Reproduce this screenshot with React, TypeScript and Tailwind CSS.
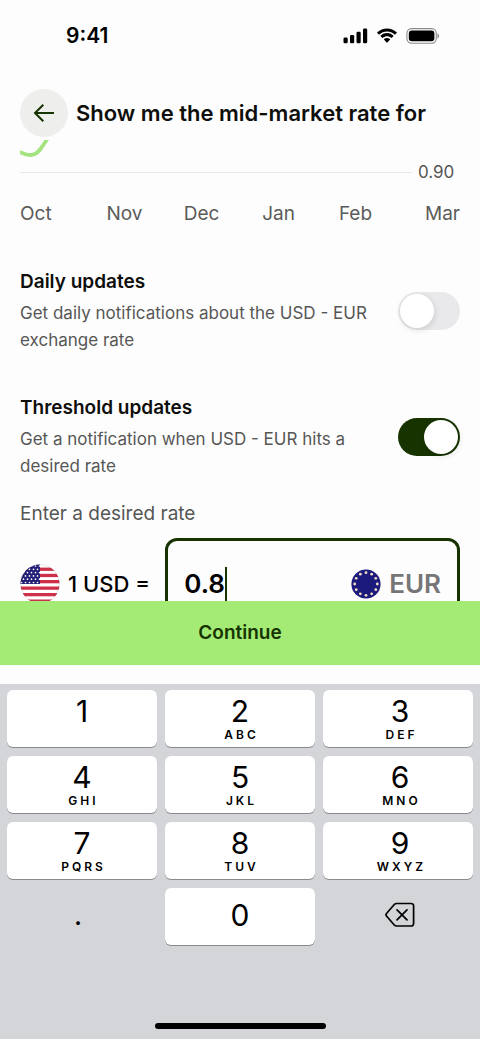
import { useState } from "react";

const MONTHS = ["Oct", "Nov", "Dec", "Jan", "Feb", "Mar"];

const KEYS = [
  { digit: "1", letters: "" },
  { digit: "2", letters: "ABC" },
  { digit: "3", letters: "DEF" },
  { digit: "4", letters: "GHI" },
  { digit: "5", letters: "JKL" },
  { digit: "6", letters: "MNO" },
  { digit: "7", letters: "PQRS" },
  { digit: "8", letters: "TUV" },
  { digit: "9", letters: "WXYZ" },
];

function StatusBar() {
  return (
    <div className="flex h-[72px] shrink-0 items-center justify-between pr-10 pl-[66px]">
      <span className="text-[21px] leading-7 font-semibold">9:41</span>
      <div className="flex items-center gap-2">
        <svg width="25" height="16" viewBox="0 0 25 16" aria-hidden="true">
          <rect x="0.5" y="9.5" width="4.2" height="5.7" rx="1.3" />
          <rect x="7" y="7" width="4.2" height="8.2" rx="1.3" />
          <rect x="13.5" y="3.8" width="4.2" height="11.4" rx="1.3" />
          <rect x="20" y="0.6" width="4.2" height="14.6" rx="1.3" />
        </svg>
        <svg width="22" height="16" viewBox="0 0 22 16" aria-hidden="true">
          <path d="M11 3.4c2.9 0 5.6 1.1 7.6 3.1.2.2.4.2.6 0l1.5-1.5c.2-.2.2-.5 0-.7a14 14 0 0 0-19.4 0c-.2.2-.2.5 0 .7l1.5 1.5c.2.2.4.2.6 0 2-2 4.7-3.1 7.6-3.1z" />
          <path d="M11 8.2c1.6 0 3.1.6 4.2 1.6.2.2.5.2.7 0l1.4-1.5c.2-.2.2-.5 0-.7a9.2 9.2 0 0 0-12.6 0c-.2.2-.2.5 0 .7l1.4 1.5c.2.2.5.2.7 0 1.1-1 2.6-1.6 4.2-1.6z" />
          <path d="M13.9 11.8c.2-.2.2-.5 0-.7a4.5 4.5 0 0 0-5.8 0c-.2.2-.2.5 0 .7l2.5 2.6c.2.2.6.2.8 0z" />
        </svg>
        <svg width="34" height="16" viewBox="0 0 34 16" aria-hidden="true">
          <rect x="0.9" y="0.6" width="29.4" height="14.6" rx="4.6" fill="none" stroke="#8c8c8c" strokeWidth="1.1" />
          <rect x="2.8" y="2.5" width="25.6" height="10.8" rx="3" />
          <path d="M31.5 5.3c1 .4 1.6 1.4 1.6 2.6s-.6 2.200-1.600 2.600z" fill="#8c8c8c" />
        </svg>
      </div>
    </div>
  );
}

function UsFlag() {
  const stars: [number, number][] = [];
  for (let row = 0; row < 6; row++) {
    for (let col = 0; col < 5; col++) {
      stars.push([(row % 2 ? 1.5 : 3.5) + col * 4, 2 + row * 3.3]);
    }
  }
  return (
    <svg className="shrink-0" width="40" height="40" viewBox="0 0 40 40" role="img" aria-label="United States">
      <defs>
        <clipPath id="us-round">
          <circle cx="20" cy="20" r="19.5" />
        </clipPath>
      </defs>
      <g clipPath="url(#us-round)">
        <rect width="40" height="40" fill="#fff" />
        {[3.6, 9.8, 16, 22.5, 29, 35.5].map((y) => (
          <rect key={y} y={y} width="40" height="3.3" fill="#cf3049" />
        ))}
        <rect width="20" height="20" fill="#231f78" />
        {stars.map(([x, y]) => (
          <circle key={`${x}-${y}`} cx={x} cy={y} r="0.85" fill="#fff" />
        ))}
      </g>
      <circle cx="20" cy="20" r="19.3" fill="none" stroke="#000" strokeOpacity="0.15" strokeWidth="0.6" />
    </svg>
  );
}

function EuFlag() {
  return (
    <svg className="shrink-0" width="30" height="30" viewBox="0 0 30 30" role="img" aria-label="European Union">
      <circle cx="15" cy="15" r="14.6" fill="#1c1a7c" />
      {Array.from({ length: 12 }, (_, i) => {
        const a = (i * Math.PI) / 6;
        return <circle key={i} cx={15 + 11.3 * Math.sin(a)} cy={15 - 11.3 * Math.cos(a)} r="1.4" fill="#f3dcc0" />;
      })}
    </svg>
  );
}

type UpdateRowProps = {
  id: string;
  title: string;
  text: string;
  defaultOn: boolean;
};

function UpdateRow({ id, title, text, defaultOn }: UpdateRowProps) {
  const [on, setOn] = useState(defaultOn);
  return (
    <div className="flex items-center justify-between gap-6">
      <div className="flex flex-1 flex-col gap-1">
        <label htmlFor={id} className="text-[19px] leading-7 font-semibold text-[#0e0f0c]">
          {title}
        </label>
        <p className="text-[17px] leading-[27px] text-[#565755]">{text}</p>
      </div>
      <input
        id={id}
        type="checkbox"
        role="switch"
        checked={on}
        onChange={(e) => setOn(e.target.checked)}
        className="flex h-[38px] w-[62px] shrink-0 cursor-pointer appearance-none items-center rounded-full bg-[#e9e8ea] p-[2px] before:size-[34px] before:rounded-full before:bg-white before:shadow-[1px_2px_6px_rgba(0,0,0,0.12)] before:content-[''] checked:justify-end checked:bg-[#163300]"
      />
    </div>
  );
}

const KEY_CLASS = "flex h-[57px] flex-col items-center rounded-md bg-white shadow-[0_1px_0_#898a8d]";

export default function App() {
  const [rate, setRate] = useState("0.8");
  const press = (c: string) => setRate((r) => r + c);

  return (
    <div className="flex h-screen flex-col overflow-hidden bg-[#fefdfe] font-['Inter',sans-serif] text-black">
      <StatusBar />
      <header className="flex shrink-0 items-center gap-2 px-5 pt-[17px] pb-[3px]">
        <button type="button" aria-label="Back" className="flex size-12 shrink-0 items-center justify-center rounded-full bg-[#eeefed]">
          <svg width="22" height="20" viewBox="0 0 22 20" fill="none" stroke="#163300" strokeWidth="2" aria-hidden="true">
            <path d="M21 10H2M10.3 1.7 2 10l8.3 8.3" />
          </svg>
        </button>
        <h1 className="text-[22px] leading-8 font-semibold text-[#0e0f0c]">Show me the mid-market rate for</h1>
      </header>

      <main className="min-h-0 flex-1 overflow-hidden px-5">
        <section aria-label="Rate history">
          <svg className="block" width="32" height="18" viewBox="0 0 32 18" fill="none" stroke="#a5e380" strokeWidth="3.8" aria-hidden="true">
            <path d="M-1 11.6C4 14.3 9 15.6 13 14.7 19 13.4 22 6.500 28-2" />
          </svg>
          <div className="mt-[2px] flex items-center gap-1.5">
            <div className="h-px flex-1 bg-[#e8e9e8]" />
            <span className="w-[42px] text-[17px] leading-6 text-[#565755]">0.90</span>
          </div>
          <div className="mt-4 grid grid-cols-[6fr_7fr_7fr_7fr_7fr_6fr] text-center text-[19px] leading-7 text-[#5a5b59]">
            {MONTHS.map((m) => (
              <span key={m} className="first:text-left last:text-right">
                {m}
              </span>
            ))}
          </div>
        </section>

        <section className="mt-10 flex flex-col gap-10">
          <UpdateRow id="daily" title="Daily updates" text="Get daily notifications about the USD - EUR exchange rate" defaultOn={false} />
          <UpdateRow id="threshold" title="Threshold updates" text="Get a notification when USD - EUR hits a desired rate" defaultOn />
        </section>

        <section className="mt-5">
          <label htmlFor="rate" className="block text-[19px] leading-7 text-[#565755]">
            Enter a desired rate
          </label>
          <div className="mt-[10px] flex items-center">
            <UsFlag />
            <span className="ml-2 flex-1 text-[22px] leading-7 font-medium whitespace-nowrap">1 USD =</span>
            <div className="flex h-[92px] w-[67%] items-center rounded-[12px] border-[3px] border-[#163300] px-4">
              <input
                id="rate"
                inputMode="decimal"
                value={rate}
                onChange={(e) => setRate(e.target.value)}
                className="field-sizing-content max-w-[130px] bg-transparent text-[26px] leading-8 font-semibold outline-none"
              />
              <span className="h-[34px] w-0.5 bg-[#163300]" />
              <span className="ml-auto flex items-center gap-2 text-[26px] leading-8 font-semibold text-[#767676]">
                <EuFlag />
                EUR
              </span>
            </div>
          </div>
        </section>
      </main>

      <button type="button" className="h-16 shrink-0 bg-[#a4eb75] text-[19px] leading-7 font-semibold text-[#163300]">
        Continue
      </button>

      <div className="mt-[19px] shrink-0 bg-[#d3d5d9] px-[7px] pt-1.5 pb-[10px]">
        <div className="grid grid-cols-3 gap-x-2 gap-y-[9px]">
          {KEYS.map((k) => (
            <button key={k.digit} type="button" onClick={() => press(k.digit)} className={`${KEY_CLASS} nth-[3n]:pl-1`}>
              <span className="pt-[5px] text-[30px] leading-8">{k.digit}</span>
              <span className="pl-[3px] text-[12px] leading-4 font-semibold tracking-[3px]">{k.letters}</span>
            </button>
          ))}
          <button type="button" onClick={() => press(".")} className="flex h-[57px] items-center justify-center pr-2 pb-1 text-[28px] leading-8">
            .
          </button>
          <button type="button" onClick={() => press("0")} className={`${KEY_CLASS} justify-center pb-1 text-[30px] leading-8`}>
            0
          </button>
          <button
            type="button"
            aria-label="Delete"
            onClick={() => setRate((r) => r.slice(0, -1))}
            className="flex h-[57px] items-center justify-center pb-1 pl-1"
          >
            <svg width="30" height="26" viewBox="0 0 30 26" fill="none" stroke="#000" strokeWidth="1.7" strokeLinecap="round" strokeLinejoin="round" aria-hidden="true">
              <path d="M11.5 1.5H26.2a2.4 2.4 0 0 1 2.4 2.4V21.6a2.4 2.4 0 0 1-2.4 2.4H11.5a2.8 2.8 0 0 1-2-.8L1.7 14.3a2.2 2.2 0 0 1 0-3L9.5 2.3a2.8 2.8 0 0 1 2-.8z" />
              <path d="M12 7.8 22 17.8M22 7.8 12 17.8" />
            </svg>
          </button>
        </div>
        <div className="mx-auto mt-[78px] h-1.5 w-[171px] rounded-full bg-black" />
      </div>
    </div>
  );
}
